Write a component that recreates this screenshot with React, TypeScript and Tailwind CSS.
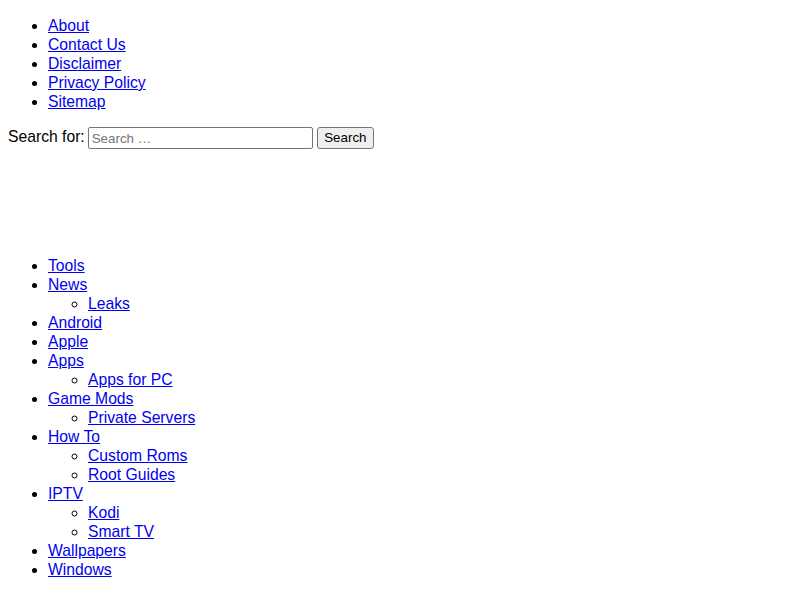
import React from 'react'

interface MenuItem {
  label: string
  children?: string[]
}

const topLinks = ['About', 'Contact Us', 'Disclaimer', 'Privacy Policy', 'Sitemap']

const menu: MenuItem[] = [
  { label: 'Tools' },
  { label: 'News', children: ['Leaks'] },
  { label: 'Android' },
  { label: 'Apple' },
  { label: 'Apps', children: ['Apps for PC'] },
  { label: 'Game Mods', children: ['Private Servers'] },
  { label: 'How To', children: ['Custom Roms', 'Root Guides'] },
  { label: 'IPTV', children: ['Kodi', 'Smart TV'] },
  { label: 'Wallpapers' },
  { label: 'Windows' },
]

const NavLink: React.FC<{ label: string }> = ({ label }) => (
  <a href="#" className="text-[#0000ee] underline">
    {label}
  </a>
)

const App: React.FC = () => {
  return (
    <div className="px-2 pb-4 font-['Liberation_Sans',Arial,sans-serif] text-[15.7px] leading-[19px] text-black bg-white">
      <ul className="my-4 pl-10 list-disc">
        {topLinks.map((item) => (
          <li key={item}>
            <NavLink label={item} />
          </li>
        ))}
      </ul>

      <form className="flex items-center h-[22px]" onSubmit={(e) => e.preventDefault()}>
        <label htmlFor="s" className="mr-[3px] mb-[3px]">
          Search for:
        </label>
        <input
          id="s"
          type="search"
          placeholder="Search …"
          className="w-[225px] h-[22px] border border-[#767676] rounded-[2px] px-[3px] text-[13.333px] placeholder:text-[#757575] outline-none"
        />
        <button
          type="submit"
          className="ml-1 h-[22px] px-[6.5px] border border-[#767676] rounded-[3px] bg-[#efefef] text-[13.333px] leading-none"
        >
          Search
        </button>
      </form>

      <div className="h-[91px]"></div>

      <ul className="my-4 pl-10 list-disc">
        {menu.map((item) => (
          <li key={item.label}>
            <NavLink label={item.label} />
            {item.children && (
              <ul className="pl-10 list-[circle]">
                {item.children.map((child) => (
                  <li key={child}>
                    <NavLink label={child} />
                  </li>
                ))}
              </ul>
            )}
          </li>
        ))}
      </ul>
    </div>
  )
}

export default App
